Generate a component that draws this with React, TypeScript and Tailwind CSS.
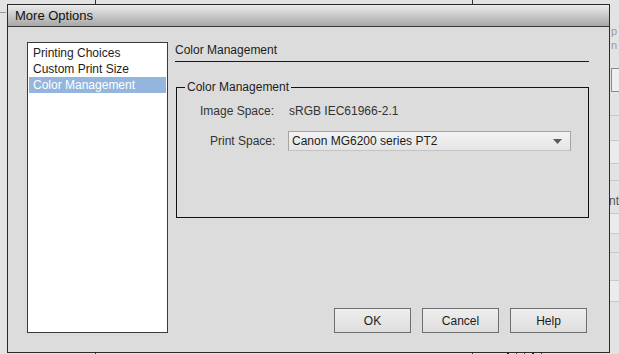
import React from 'react';

const font = { fontFamily: '"Liberation Sans", Arial, sans-serif' };

export default function App() {
  return (
    <div
      className="relative w-[619px] h-[354px] overflow-hidden bg-[#e3e3e3] pl-[7px] pt-[4px] text-[12px] text-[#1c1c1c]"
      style={font}
    >
      {/* bits of the app behind the dialog */}
      <div className="absolute left-0 top-[12px] w-[6px] h-px bg-[#9a9a9a]" />
      <div className="absolute left-[95px] top-0 w-px h-[4px] bg-[#333]" />
      <div className="absolute left-[472px] top-0 w-px h-[4px] bg-[#333]" />
      <div className="absolute left-[95px] bottom-0 w-px h-[2px] bg-[#333]" />
      <div className="absolute left-[472px] bottom-0 w-px h-[2px] bg-[#333]" />
      <div className="absolute left-[507px] bottom-0 w-[70px] h-[2px] flex gap-[7px]">
        <div className="w-[2px] h-full bg-[#222]" />
        <div className="w-px h-full bg-[#444]" />
        <div className="w-px h-full bg-[#444]" />
        <div className="w-[2px] h-full bg-[#222]" />
        <div className="w-px h-full bg-[#444]" />
      </div>
      <div className="absolute left-[611px] top-[24px] w-[8px] overflow-hidden text-[11px] leading-[14px] text-[#999]">p<br />n</div>
      <div className="absolute left-[611px] top-[68px] w-[10px] h-[24px] border border-[#8a8a8a] bg-[#efefef]" />
      <div className="absolute left-[610px] top-[115px] w-[9px] h-px bg-[#c8c8c8]" />
      <div className="absolute left-[610px] top-[140px] w-[9px] h-[24px] border-y border-[#c8c8c8] bg-[#ececec]" />
      <div className="absolute left-[610px] top-[180px] w-[9px] h-px bg-[#c8c8c8]" />
      <div className="absolute left-[609px] top-[192px] text-[12px] text-[#555]">nt</div>
      <div className="absolute left-[610px] top-[213px] w-[9px] h-[21px] border-y border-[#c8c8c8] bg-[#ececec]" />
      <div className="absolute left-[610px] top-[252px] w-[9px] h-px bg-[#c8c8c8]" />
      <div className="absolute left-[610px] top-[280px] w-[9px] h-[22px] border-y border-[#c8c8c8] bg-[#ececec]" />

      {/* dialog */}
      <div className="relative w-[603px] h-[349px] flex flex-col border border-[#2a2a2a] bg-[#dcdcdc]">
        <div className="h-[22px] shrink-0 flex items-center pl-[7px] border-b border-[#3a3a3a] bg-gradient-to-b from-[#ececec] to-[#a7a7a7] text-[13px] text-[#111]">
          More Options
        </div>

        <div className="flex-1 flex pl-[19px] pt-[15px] pb-[19px]">
          {/* list */}
          <div className="w-[141px] h-[291px] shrink-0 border border-[#3a3a3a] bg-white pt-[2px] px-[1px] leading-[16px]">
            <div className="pl-[4px]">Printing Choices</div>
            <div className="pl-[4px]">Custom Print Size</div>
            <div className="pl-[4px] bg-[#93b5de] text-white">Color Management</div>
          </div>

          {/* right panel */}
          <div className="ml-[7px] w-[414px] flex flex-col">
            <div className="leading-[16px] pb-[3px] border-b border-[#1a1a1a]">Color Management</div>

            <fieldset className="mt-[17px] w-[413px] ml-px border border-[#111] px-[8px] pb-[66px]">
              <legend className="px-[2px] leading-[16px]">Color Management</legend>
              <div className="flex items-center h-[16px] mt-[8px] text-[#333]">
                <span className="pl-[15px] w-[104px]">Image Space:</span>
                <span>sRGB IEC61966-2.1</span>
              </div>
              <div className="flex items-center mt-[12px] text-[#333]">
                <span className="pl-[25px] w-[103px]">Print Space:</span>
                <div className="relative w-[283px] h-[20px] flex items-center pl-[3px] border border-[#a4a4a4] border-b-[#c4c4c4] bg-gradient-to-b from-[#f3f3f3] to-[#e4e4e4] text-[#1c1c1c]">
                  Canon MG6200 series PT2
                  <svg className="absolute right-[8px] top-[7px]" width="9" height="5" viewBox="0 0 9 5">
                    <path d="M0 0h9L4.5 5z" fill="#5a5a5a" />
                  </svg>
                </div>
              </div>
            </fieldset>

            <div className="mt-auto flex justify-end gap-[11px] pr-[2px]">
              {['OK', 'Cancel', 'Help'].map((b) => (
                <button
                  key={b}
                  className="w-[77px] h-[25px] border border-[#6f6f6f] bg-gradient-to-b from-[#eeeeee] to-[#dedede] text-[12px] text-[#1c1c1c]"
                >
                  {b}
                </button>
              ))}
            </div>
          </div>
        </div>
      </div>
    </div>
  );
}
